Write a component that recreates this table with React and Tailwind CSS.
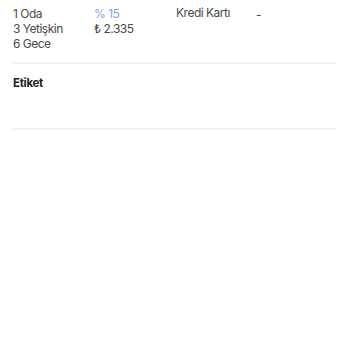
export default function App() {
  return (
    <div className="w-[350px] h-[350px] bg-white px-[12px] pt-[6px] text-[#4a4a4a]" style={{ fontFamily: 'Inter, "Open Sans", sans-serif' }}>
      <div className="grid grid-cols-4 w-[324px] text-[12px] leading-[15px] tracking-[-0.5px]">
        <div className="pl-[1px]">
          <div>1 Oda</div>
          <div>3 Yetişkin</div>
          <div>6 Gece</div>
        </div>
        <div className="pl-[1px]">
          <div className="text-[#7aa6e6]">% 15</div>
          <div>₺ 2.335</div>
        </div>
        <div className="pl-[2px] -mt-[1px]">
          <div>Kredi Kartı</div>
        </div>
        <div className="pl-[1px] mt-[1px]">
          <div>-</div>
        </div>
      </div>
      <div className="mt-[11px] h-[2px] bg-[#f2f2f2] w-[324px]" />
      <div className="pt-[12px] pl-[1px] text-[11.5px] leading-[15px] font-bold text-[#222] tracking-[-0.3px]">Etiket</div>
      <div className="mt-[37px] h-[2px] bg-[#f2f2f2] w-[324px]" />
    </div>
  );
}
